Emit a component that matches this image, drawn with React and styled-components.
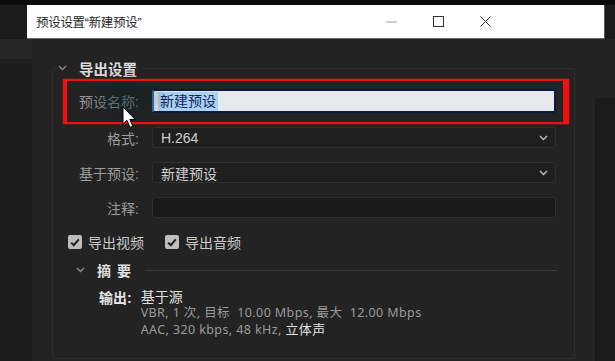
import React from "react";
import styled, { createGlobalStyle } from "styled-components";

const GlobalStyle = createGlobalStyle`
  html, body { margin: 0; padding: 0; background: #1c1c1c; }
  body { font-family: "Liberation Sans", "Noto Sans CJK SC", sans-serif; }
  * { box-sizing: border-box; }
`;

const Screen = styled.div`
  width: 615px;
  height: 361px;
  overflow: hidden;
  display: flex;
  flex-direction: column;
  background: #1d1d1d;
`;

const TopStrip = styled.div`
  height: 5px;
  background: #0b0b0b;
`;

const TitleRow = styled.div`
  display: flex;
  height: 34px;
`;

const Gutter = styled.div`
  width: ${(p) => p.$w || "auto"};
  flex: ${(p) => (p.$w ? "none" : "1")};
  background: #1b1b1b;
`;

const TitleBar = styled.div`
  width: 578px;
  background: #ffffff;
  border-bottom: 1px solid #6a6a6a;
  border-right: 1px solid #555;
  display: flex;
  align-items: center;
  padding-left: 9px;
`;

const TitleText = styled.span`
  font-size: 12.5px;
  color: #262626;
  letter-spacing: -0.3px;
`;

const WinControls = styled.div`
  margin-left: auto;
  margin-right: 95px;
  display: flex;
  align-items: center;
`;

const WinButton = styled.div`
  width: 47px;
  height: 33px;
  display: flex;
  align-items: center;
  justify-content: center;
`;

const BodyRow = styled.div`
  flex: 1;
  display: flex;
  min-height: 0;
`;

const LeftStrip = styled.div`
  width: 32px;
  background: linear-gradient(#272727 0 20px, #1d1d1d 20px);
`;

const RightStrip = styled.div`
  flex: 1;
  background: linear-gradient(#232323 0 59px, #1b1b1b 59px);
`;

const Body = styled.div`
  width: 563px;
  background: #232323;
  padding: 19px 20px 0 20px;
  display: flex;
  flex-direction: column;
`;

const Panel = styled.fieldset`
  margin: 0;
  padding: 0;
  height: 301px;
  border: 1px solid #2e2e2e;
  border-radius: 3px;
  min-width: 0;
`;

const Legend = styled.legend`
  margin-left: 5px;
  padding: 0 6px 0 0;
  display: flex;
  align-items: center;
  gap: 12px;
  height: 20px;
`;

const SectionTitle = styled.span`
  font-size: 14.5px;
  font-weight: 700;
  color: #dcdcdc;
`;

const FormWrap = styled.div`
  position: relative;
  margin-top: 11px;
`;

const FormArea = styled.div`
  display: grid;
  grid-template-columns: 86px 404px;
  column-gap: 13px;
  row-gap: 14px;
  align-items: center;
`;

const Label = styled.div`
  text-align: right;
  font-size: 14px;
  color: #9c9c9c;
`;

const NameInput = styled.div`
  height: 24px;
  background: #e7e8ee;
  border: 2px solid #0b1a44;
  border-left-color: #3a6fb5;
  border-radius: 3px;
  display: flex;
  align-items: center;
  padding-left: 4px;
`;

const Selected = styled.span`
  background: #a9d1f2;
  color: #14245e;
  font-size: 14px;
  line-height: 19px;
  padding: 0 2px;
`;

const Select = styled.div`
  height: 21px;
  background: ${(p) => (p.$plain ? "#1a1a1a" : "#1f1f1f")};
  border: 1px solid #2f2f2f;
  border-radius: 3px;
  display: flex;
  align-items: center;
  padding: 0 7px 0 8px;
  font-size: 14px;
  color: #cfcfcf;
`;

const SelectValue = styled.span`
  flex: 1;
`;

const Highlight = styled.div`
  position: absolute;
  left: 10px;
  top: -10px;
  width: 506px;
  height: 45px;
  border-style: solid;
  border-color: #f01010;
  border-width: 2px 6px 2px 4px;
  box-shadow: 0 0 2px rgba(255, 20, 20, 0.6);
  pointer-events: none;
`;

const Glow = styled.div`
  position: absolute;
  left: 25px;
  top: -20px;
  width: 90px;
  height: 60px;
  background: radial-gradient(ellipse at center, rgba(10, 35, 38, 0.55), rgba(10, 35, 38, 0) 70%);
  pointer-events: none;
`;

const CursorBox = styled.div`
  position: absolute;
  left: 69px;
  top: 17px;
  width: 16px;
  height: 23px;
  pointer-events: none;
  display: flex;
`;

const CheckRow = styled.div`
  margin-top: 14px;
  padding-left: 15px;
  display: flex;
  align-items: center;
`;

const CheckItem = styled.label`
  display: flex;
  align-items: center;
  gap: 6px;
  margin-right: 21px;
  font-size: 14px;
  color: #c9c9c9;
`;

const Box = styled.span`
  width: 14px;
  height: 14px;
  border-radius: 2px;
  background: #bdbdbd;
  display: flex;
  align-items: center;
  justify-content: center;
`;

const SummaryHeader = styled.div`
  margin-top: 10px;
  padding-left: 23px;
  height: 16px;
  display: flex;
  align-items: center;
`;

const SummaryTitle = styled.span`
  margin-left: 12px;
  font-size: 14px;
  font-weight: 700;
  letter-spacing: 6px;
  color: #e0e0e0;
`;

const Rule = styled.div`
  margin-left: 8px;
  width: 412px;
  height: 1px;
  background: #3a3a3a;
`;

const SummaryBody = styled.div`
  margin-top: 12px;
  padding-left: 46px;
  display: grid;
  grid-template-columns: auto 1fr;
  column-gap: 9px;
  align-items: start;
`;

const SumKey = styled.div`
  font-size: 14px;
  font-weight: 700;
  color: #e6e6e6;
  height: 16px;
  line-height: 16px;
`;

const SumLines = styled.div`
  display: flex;
  flex-direction: column;
`;

const SumLine = styled.div`
  font-family: ${(p) => (p.$main ? "inherit" : '"Noto Sans", "Noto Sans CJK SC", sans-serif')};
  font-size: ${(p) => (p.$main ? "14px" : "12.5px")};
  letter-spacing: ${(p) => (p.$main ? "0" : "0.4px")};
  color: ${(p) => (p.$main ? "#e0e0e0" : "#9a9a9a")};
  height: ${(p) => (p.$main ? "15px" : "16px")};
  line-height: ${(p) => (p.$main ? "15px" : "16px")};
  white-space: pre;
`;

const Bright = styled.span`
  color: #e0e0e0;
  font-size: 13px;
`;

const Chevron = ({ color = "#8a8a8a", w = 9 }) => (
  <svg width={w} height="6" viewBox="0 0 9 6">
    <path d="M1 1 L4.5 4.5 L8 1" fill="none" stroke={color} strokeWidth="1.4" />
  </svg>
);

const Check = () => (
  <svg width="10" height="9" viewBox="0 0 10 9">
    <path d="M1.2 4.6 L3.8 7.2 L8.8 1.4" fill="none" stroke="#1e1e1e" strokeWidth="2" />
  </svg>
);

export default function App() {
  return (
    <>
      <GlobalStyle />
      <Screen>
        <TopStrip />
        <TitleRow>
          <Gutter $w="27px" />
          <TitleBar>
            <TitleText>预设设置“新建预设”</TitleText>
            <WinControls>
              <WinButton>
                <svg width="11" height="2" viewBox="0 0 11 2">
                  <path d="M0 1 H11" stroke="#a0a0a0" strokeWidth="1" />
                </svg>
              </WinButton>
              <WinButton>
                <svg width="11" height="11" viewBox="0 0 11 11">
                  <rect x="0.5" y="0.5" width="10" height="10" fill="none" stroke="#333" strokeWidth="1" />
                </svg>
              </WinButton>
              <WinButton>
                <svg width="11" height="11" viewBox="0 0 11 11">
                  <path d="M0.5 0.5 L10.5 10.5 M10.5 0.5 L0.5 10.5" stroke="#333" strokeWidth="1" />
                </svg>
              </WinButton>
            </WinControls>
          </TitleBar>
          <Gutter />
        </TitleRow>
        <BodyRow>
          <LeftStrip />
          <Body>
            <Panel>
              <Legend>
                <Chevron />
                <SectionTitle>导出设置</SectionTitle>
              </Legend>
              <FormWrap>
                <FormArea>
                  <Label>预设名称:</Label>
                  <NameInput>
                    <Selected>新建预设</Selected>
                  </NameInput>
                  <Label>格式:</Label>
                  <Select>
                    <SelectValue>H.264</SelectValue>
                    <Chevron color="#bdbdbd" />
                  </Select>
                  <Label>基于预设:</Label>
                  <Select>
                    <SelectValue>新建预设</SelectValue>
                    <Chevron color="#bdbdbd" />
                  </Select>
                  <Label>注释:</Label>
                  <Select $plain />
                </FormArea>
                <Glow />
                <Highlight />
                <CursorBox>
                  <svg width="16" height="23" viewBox="0 0 16 23">
                    <path
                      d="M1 1 L1 18 L5 14.4 L8 21.4 L10.8 20.2 L7.9 13.4 L13.2 13.4 Z"
                      fill="#ffffff"
                      stroke="#000"
                      strokeWidth="1"
                      strokeLinejoin="round"
                    />
                  </svg>
                </CursorBox>
              </FormWrap>
              <CheckRow>
                <CheckItem>
                  <Box>
                    <Check />
                  </Box>
                  导出视频
                </CheckItem>
                <CheckItem>
                  <Box>
                    <Check />
                  </Box>
                  导出音频
                </CheckItem>
              </CheckRow>
              <SummaryHeader>
                <Chevron />
                <SummaryTitle>摘要</SummaryTitle>
                <Rule />
              </SummaryHeader>
              <SummaryBody>
                <SumKey>输出:</SumKey>
                <SumLines>
                  <SumLine $main>基于源</SumLine>
                  <SumLine>VBR, 1 次, 目标  10.00 Mbps, 最大  12.00 Mbps</SumLine>
                  <SumLine>
                    AAC, 320 kbps, 48 kHz, <Bright>立体声</Bright>
                  </SumLine>
                </SumLines>
              </SummaryBody>
            </Panel>
          </Body>
          <RightStrip />
        </BodyRow>
      </Screen>
    </>
  );
}
